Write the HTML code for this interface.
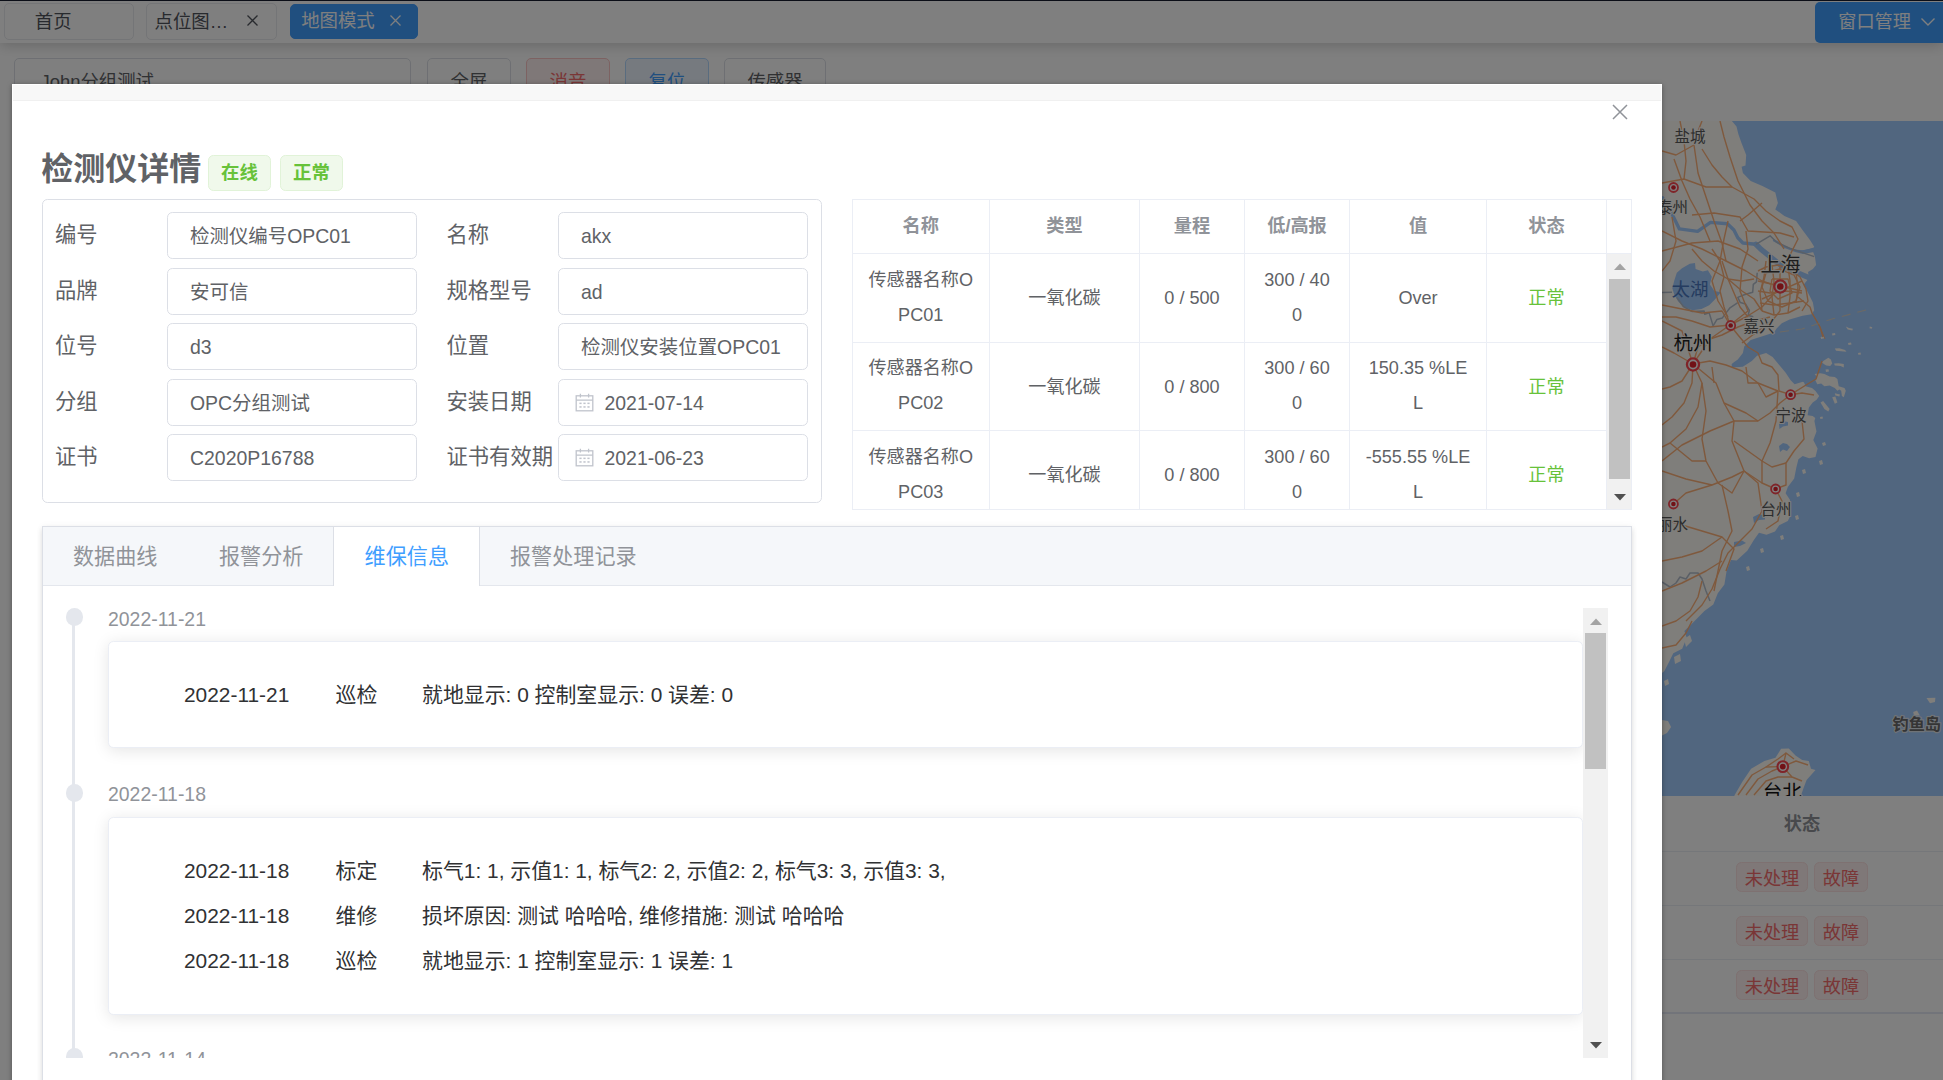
<!DOCTYPE html>
<html lang="zh-CN">
<head>
<meta charset="utf-8">
<title>检测仪详情</title>
<style>
*{box-sizing:border-box;margin:0;padding:0}
html,body{width:1943px;height:1080px;overflow:hidden}
body{position:relative;background:#fff;font-family:"Liberation Sans","Noto Sans CJK SC",sans-serif;color:#606266}
.abs{position:absolute}
.nowrap{white-space:nowrap}
/* ---------- underlying page ---------- */
#page{position:absolute;left:0;top:0;width:1943px;height:1080px;overflow:hidden}
#topline{position:absolute;left:0;top:0;width:1943px;height:1.4px;background:#161c2e}
#topbar{position:absolute;left:0;top:1px;width:1943px;height:42px;background:#fff;box-shadow:0 2px 14px rgba(0,0,0,.2)}
.ptab{position:absolute;top:3px;height:37px;border:1px solid #e8eaee;border-radius:5px;font-size:18.4px;line-height:35px;color:#50545c;white-space:nowrap}
.ptab.on{background:#409eff;border-color:#409eff;color:#fff}
.pbtn{position:absolute;top:58px;height:47px;border:1px solid #dcdfe6;border-radius:5px;background:#fff;font-size:18.4px;line-height:46px;text-align:center;color:#606266;white-space:nowrap}
#overlay{position:absolute;left:0;top:0;width:1943px;height:1080px;background:rgba(0,0,0,.5)}
/* ---------- dialog ---------- */
#dlg{position:absolute;left:12px;top:84px;width:1650px;height:1100px;background:#fff;box-shadow:0 1px 5px rgba(0,0,0,.35)}
#dlghead{position:absolute;left:1px;top:1px;width:1648px;height:16px;background:#f8f8f8;border-bottom:1px solid #f0f0f0}
.lab{position:absolute;font-size:21.3px;line-height:46.3px;height:47.3px;color:#606266;white-space:nowrap}
.inp{position:absolute;width:250px;height:47.3px;border:1px solid #dcdfe6;border-radius:5.4px;background:#fff;font-size:19.44px;line-height:46.2px;color:#606266;padding-left:22px;white-space:nowrap;overflow:hidden}
.inp.date{padding-left:45.5px}
.tag{position:absolute;top:155px;height:35.5px;width:63px;border:1px solid #e1f3d8;background:#f0f9eb;border-radius:5.4px;color:#67c23a;font-weight:bold;font-size:18.4px;line-height:34.5px;text-align:center}
.rtag{position:absolute;height:29.5px;border:1px solid #fde2e2;background:#fef0f0;border-radius:5.4px;color:#f56c6c;font-size:18.2px;line-height:32px;text-align:center;white-space:nowrap}
/* table */
.vl{position:absolute;top:199px;width:1px;height:311px;background:#ebeef5}
.hl{position:absolute;left:852px;height:1px;width:755px;background:#ebeef5}
.th{position:absolute;top:199px;height:54px;line-height:54px;text-align:center;font-weight:bold;font-size:18.2px;color:#909399;white-space:nowrap}
.td{position:absolute;text-align:center;font-size:18.1px;line-height:35px;color:#606266;white-space:nowrap}
.ok{color:#67c23a}
/* tabs */
.tb{position:absolute;top:527px;height:60px;line-height:60.6px;font-size:21.1px;color:#909399;white-space:nowrap}
.ts{position:absolute;left:108px;font-size:19.44px;line-height:26px;color:#909399;white-space:nowrap}
.dot{position:absolute;left:66.2px;width:17.3px;height:17.3px;border-radius:50%;background:#e4e7ed}
.card{position:absolute;left:108.5px;width:1475.2px;background:#fff;border:1px solid #ebeef5;border-radius:5.4px;box-shadow:0 2.7px 16px rgba(0,0,0,.1)}
.ct{position:absolute;font-size:20.9px;line-height:46.6px;height:45px;color:#303133;white-space:nowrap}
</style>
</head>
<body>
<div id="page">
  <div id="topbar"></div>
  <div id="topline"></div>
  <div class="ptab" style="left:4px;width:130px;padding-left:29.8px">首页</div>
  <div class="ptab" style="left:146px;width:131px;padding-left:7.5px">点位图…<svg class="abs" style="left:99px;top:9.7px" width="13" height="13" viewBox="0 0 13 13"><path d="M1.5 1.5L11.5 11.5M11.5 1.5L1.5 11.5" stroke="#50545c" stroke-width="1.3" fill="none"/></svg></div>
  <div class="ptab on" style="left:290px;top:4px;height:35px;width:128px;padding-left:10.2px;line-height:32px">地图模式<svg class="abs" style="left:98px;top:8.7px" width="13" height="13" viewBox="0 0 13 13"><path d="M1.5 1.5L11.5 11.5M11.5 1.5L1.5 11.5" stroke="#fff" stroke-width="1.3" fill="none"/></svg></div>
  <div class="abs" style="left:1815px;top:2px;width:140px;height:41px;background:#409eff;border-radius:5px 0 0 5px;color:#fff;font-size:18.2px;line-height:41.5px;padding-left:23.2px;white-space:nowrap">窗口管理<svg class="abs" style="left:104.6px;top:14.6px" width="16" height="10" viewBox="0 0 16 10"><path d="M1.5 1.5L8 8L14.5 1.5" stroke="#fff" stroke-width="1.4" fill="none"/></svg></div>

  <div class="pbtn" style="left:14px;width:397px;text-align:left;padding-left:25.5px">John分组测试</div>
  <div class="pbtn" style="left:427px;width:84px">全屏</div>
  <div class="pbtn" style="left:526px;width:84px;color:#f56c6c;background:#fef0f0;border-color:#fbc4c4">消音</div>
  <div class="pbtn" style="left:625px;width:84px;color:#409eff;background:#ecf5ff;border-color:#b3d8ff">复位</div>
  <div class="pbtn" style="left:724px;width:102px">传感器</div>

  <!-- MAP -->
  <div id="map" class="abs" style="left:1662px;top:121px;width:281px;height:675px;background:#a3ccff;overflow:hidden">
<svg class="abs" style="left:0;top:0" width="281" height="675" viewBox="0 0 281 675">
<rect width="281" height="675" fill="#a3ccff"/>
<polygon points="-5.0,-5.0 69.9,-5.0 69.9,0.0 74.5,5.5 76.4,13.3 79.6,22.3 84.2,34.0 83.5,44.4 79.6,45.7 80.9,52.1 88.7,59.9 100.4,65.1 113.3,71.6 115.9,81.9 113.3,88.4 122.4,94.9 134.1,100.1 140.5,109.0 148.3,119.4 152.2,125.8 150.5,129.5 152.9,135.6 154.1,144.0 150.9,147.9 146.0,151.0 147.0,157.0 141.8,163.4 147.0,173.8 150.9,181.6 152.2,189.3 149.6,193.2 140.5,194.8 127.6,198.4 119.8,202.3 114.6,207.5 112.0,211.4 96.5,216.6 88.7,219.1 82.2,225.6 80.9,232.1 75.8,238.6 71.9,241.2 69.7,243.0 69.7,246.4 80.8,245.7 89.8,239.9 95.0,234.7 104.1,232.1 110.6,236.0 117.0,243.8 123.5,251.6 128.7,259.3 132.6,263.2 141.7,260.5 143.5,265.2 150.0,267.0 153.5,270.0 157.2,274.9 154.6,278.8 150.7,281.4 146.9,286.6 145.6,294.3 150.7,295.0 153.3,296.9 152.4,299.9 154.5,310.6 151.3,319.1 155.6,327.6 153.5,336.1 147.1,337.2 140.7,335.1 136.4,338.3 134.3,346.8 132.2,357.4 125.8,365.9 123.6,372.3 127.9,378.7 129.0,393.6 125.8,400.0 117.2,404.3 113.0,410.6 104.5,413.8 97.0,411.7 91.7,419.2 85.3,429.8 74.7,439.4 69.0,439.0 64.6,450.1 62.4,463.4 55.8,472.3 51.3,483.4 42.4,490.1 35.8,496.8 29.1,503.4 22.4,510.1 24.7,516.7 20.2,527.8 11.3,532.3 6.9,541.2 2.4,550.1 -5.0,556.0" fill="#fffcf6"/>
<polygon points="72.4,680.0 72.4,674.5 80.2,661.1 89.1,647.8 102.4,640.0 113.5,636.7 119.1,627.8 126.8,627.4 133.5,634.5 140.2,638.9 146.8,640.0 149.0,647.8 153.5,648.9 144.6,658.9 141.3,667.8 139.0,674.5 139.0,680.0" fill="#fffcf6"/>
<polygon points="152.7,252.9 154.6,255.5 153.3,259.3 155.3,263.2 159.2,262.6 162.4,265.2 167.6,264.5 172.8,267.1 175.4,269.7 177.3,268.4 179.2,269.7 179.9,274.9 181.8,276.2 183.8,269.7 182.5,267.1 176.7,265.2 175.4,258.0 172.8,256.1 167.6,255.5 162.4,252.9 158.5,252.2" fill="#fffcf6"/>
<polygon points="159.8,241.2 162.4,239.3 166.3,236.7 168.9,238.6 170.2,242.5 168.2,245.1 164.3,244.4 161.8,243.1" fill="#fffcf6"/>
<polygon points="172.1,242.5 176.7,242.2 181.8,243.1 181.8,246.4 178.6,245.1 172.8,244.4" fill="#fffcf6"/>
<polygon points="172.8,227.6 177.3,227.2 183.1,228.9 184.4,230.8 179.2,230.2 174.1,229.8" fill="#fffcf6"/>
<polygon points="183.8,205.6 187.0,206.9 190.9,207.8 190.3,209.5 185.7,208.5" fill="#fffcf6"/>
<polygon points="207.8,205.6 210.3,206.2 209.7,207.8 207.5,207.2" fill="#fffcf6"/>
<polygon points="158.5,215.9 161.8,215.3 162.4,217.2 159.2,217.9" fill="#fffcf6"/>
<polygon points="158.5,281.4 161.1,280.1 167.6,287.9 166.3,290.4 162.4,287.9" fill="#fffcf6"/>
<polygon points="170.2,276.2 173.4,275.5 175.4,281.4 172.8,282.7" fill="#fffcf6"/>
<polygon points="172.8,272.3 178.0,273.6 177.3,275.5 173.4,274.6" fill="#fffcf6"/>
<polygon points="163.5,248.6 166.5,248.2 167.0,250.6 164.0,251.0" fill="#fffcf6"/>
<polygon points="186.0,222.0 189.0,221.5 189.5,223.5 186.5,224.0" fill="#fffcf6"/>
<polygon points="196.0,232.0 198.5,231.6 199.0,233.4 196.4,233.8" fill="#fffcf6"/>
<polygon points="170.0,212.5 173.0,212.0 173.4,214.0 170.4,214.4" fill="#fffcf6"/>
<polygon points="158.0,296.0 160.5,295.4 161.0,297.6 158.4,298.0" fill="#fffcf6"/>
<polygon points="160.0,322.0 163.0,321.0 164.0,324.0 161.0,325.0" fill="#fffcf6"/>
<polygon points="157.0,340.0 160.0,339.0 161.0,343.0 158.0,344.0" fill="#fffcf6"/>
<polygon points="140.0,349.0 143.0,348.0 144.0,352.0 141.0,353.0" fill="#fffcf6"/>
<polygon points="134.0,372.0 137.0,371.0 138.0,375.0 135.0,376.0" fill="#fffcf6"/>
<polygon points="133.0,395.0 136.0,394.0 137.0,398.0 134.0,399.0" fill="#fffcf6"/>
<polygon points="118.0,415.0 121.0,414.0 122.0,418.0 119.0,419.0" fill="#fffcf6"/>
<polygon points="98.0,428.0 101.0,427.0 102.0,431.0 99.0,432.0" fill="#fffcf6"/>
<polygon points="84.0,446.0 87.0,445.0 88.0,449.0 85.0,450.0" fill="#fffcf6"/>
<polygon points="0.0,599.0 6.0,600.0 9.1,606.0 5.0,612.0 0.0,614.5" fill="#fffcf6"/>
<polygon points="264.5,577.0 273.4,576.7 273.0,581.0 268.0,582.3" fill="#fffcf6"/>
<polygon points="251.2,591.0 255.0,589.5 257.9,594.5 252.0,594.5" fill="#fffcf6"/>
<polygon points="22.0,518.0 28.0,514.0 30.0,520.0 24.0,526.0" fill="#fffcf6"/>
<polygon points="12.0,536.0 18.0,533.0 19.0,540.0 13.0,543.0" fill="#fffcf6"/>
<polygon points="2.0,560.0 6.0,558.0 7.0,563.0 3.0,565.0" fill="#fffcf6"/>
<polygon points="117.0,303.0 121.0,300.0 126.0,301.0 126.0,304.5 121.0,305.5 117.5,308.0" fill="#a3ccff"/>
<polygon points="117.0,325.0 121.0,322.0 125.0,323.0 128.0,326.0 125.0,330.0 121.0,328.5 118.0,331.0" fill="#a3ccff"/>
<polygon points="91.0,396.0 97.0,393.0 103.0,394.5 103.0,398.5 97.0,399.0 92.0,402.0" fill="#a3ccff"/>
<polygon points="140.0,256.5 145.0,254.5 149.5,255.5 149.5,260.0 145.5,262.5 141.0,261.0" fill="#a3ccff"/>
<polygon points="72.0,421.0 80.0,419.5 84.0,422.0 78.0,425.0 72.0,426.0" fill="#a3ccff"/>
<polygon points="12.3,159.5 14.8,151.8 20.0,147.2 27.8,142.7 33.0,142.0 33.6,147.9 40.8,150.5 45.9,149.2 49.8,155.7 47.9,163.4 52.4,169.9 58.9,171.2 52.4,179.0 47.2,184.2 39.5,188.0 30.4,189.3 21.3,185.5 16.1,180.3 12.3,173.8 10.3,167.3" fill="#a3ccff"/>
<polyline points="0.6,76.8 11.0,94.9 17.4,107.9 35.6,110.4 48.5,101.4 65.4,102.7 71.9,109.0 75.8,116.8 80.9,122.0 93.9,123.3" fill="none" stroke="#a3ccff" stroke-width="3.4" stroke-linejoin="round" stroke-linecap="round"/>
<polyline points="93.9,123.3 99.1,128.4 105.6,133.6 112.0,138.8 118.5,144.0 127.6,147.9 135.4,151.8 141.8,154.4 149.0,157.5" fill="none" stroke="#a3ccff" stroke-width="5.4" stroke-linejoin="round" stroke-linecap="round"/>
<polyline points="112.0,119.5 114.6,120.7 122.4,125.8 132.8,129.7 140.5,130.4 151.0,128.6" fill="none" stroke="#a3ccff" stroke-width="2.2" stroke-linejoin="round" stroke-linecap="round"/>
<polygon points="133,129 141,129.5 152,126.5 152,131 141,133 133,131" fill="#a3ccff"/>
<g fill="none" stroke="#b4bfcc" stroke-width="1.5" stroke-linejoin="round">
<polyline points="93.9,123.3 108.1,114.8 114.6,121.3 127.6,127.1 152.2,135.6"/>
<polyline points="95.2,151.8 94.5,160.8 91.3,163.4 90.7,171.2 82.2,173.8 75.8,176.4 78.3,181.6 83.5,182.9 87.4,189.3 86.1,194.5 91.3,195.8"/>
<polyline points="75.8,181.6 68.0,186.8 64.1,191.9 60.2,197.1 55.0,198.4 51.1,204.9"/>
<polyline points="14.8,176.4 21.3,185.5 30.4,190.6 42.1,190.0 42.7,193.2 47.2,191.9 51.1,204.9"/>
<polyline points="0.0,171.5 10.0,171.2"/>
<polyline points="0.0,461.0 8.0,466.0 14.0,462.0 18.0,456.0 24.0,458.0 28.0,452.0 36.0,452.0 40.0,458.0 44.0,470.0 48.0,480.0"/>
</g>
<g fill="none" stroke="#ffb27a" stroke-width="1.4" stroke-linejoin="round">
<polyline points="40.0,0.0 36.0,10.0 32.0,24.0 36.0,52.0 44.0,76.0 52.0,100.0 60.0,122.0 64.0,140.0"/>
<polyline points="12.0,38.0 20.0,60.0 28.0,78.0 38.0,96.0 48.0,120.0"/>
<polyline points="58.0,0.0 62.0,16.0 68.0,36.0 76.0,60.0 88.0,84.0 100.0,100.0 112.0,112.0 122.0,128.0"/>
<polyline points="0.0,62.0 22.0,58.0 44.0,66.0 70.0,66.0 92.0,78.0 104.0,90.0 118.0,100.0 130.0,106.0 136.0,118.0 128.0,134.0"/>
<polyline points="30.0,94.0 52.0,92.0 78.0,96.0 86.0,110.0 118.0,112.0 132.0,116.0"/>
<polyline points="100.0,82.0 86.0,94.0 78.0,100.0"/>
<polyline points="0.0,110.0 20.0,120.0 40.0,128.0 64.0,140.0 84.0,150.0 100.0,160.0 118.0,166.0"/>
<polyline points="10.0,96.0 14.0,120.0 8.0,140.0 0.0,150.0"/>
<polyline points="0.0,130.0 30.0,122.0 56.0,120.0 78.0,128.0 96.0,140.0"/>
<polyline points="66.0,100.0 62.0,118.0 58.0,140.0 50.0,160.0 56.0,180.0 66.0,196.0"/>
<polyline points="84.0,110.0 86.0,128.0 80.0,146.0 78.0,170.0 86.0,190.0 68.0,204.0"/>
<polyline points="104.0,152.0 118.0,148.0 132.0,154.0 138.0,166.0 134.0,180.0 120.0,186.0 106.0,180.0 100.0,166.0 104.0,152.0"/>
<polyline points="110.0,158.0 126.0,158.0 130.0,172.0 116.0,178.0 108.0,170.0 110.0,158.0"/>
<polyline points="96.0,160.0 140.0,170.0"/>
<polyline points="118.0,146.0 118.0,190.0"/>
<polyline points="100.0,178.0 140.0,160.0"/>
<polyline points="118.0,166.0 100.0,186.0 84.0,196.0 68.0,204.0 48.0,218.0 31.0,243.0"/>
<polyline points="136.0,176.0 148.0,186.0 150.0,192.0"/>
<polyline points="150.0,192.0 158.0,206.0 161.0,216.0"/>
<polyline points="118.0,190.0 110.0,200.0 96.0,210.0 80.0,222.0"/>
<polyline points="96.0,150.0 104.0,146.0 116.0,144.0 128.0,148.0 138.0,156.0 144.0,168.0 146.0,180.0 140.0,190.0"/>
<polyline points="100.0,190.0 112.0,194.0 126.0,192.0 138.0,186.0"/>
<polyline points="104.0,140.0 102.0,156.0 98.0,172.0 100.0,190.0"/>
<polyline points="126.0,146.0 128.0,160.0 128.0,176.0 126.0,192.0"/>
<polyline points="110.0,144.0 112.0,160.0 110.0,176.0 112.0,194.0"/>
<polyline points="134.0,152.0 136.0,166.0 134.0,182.0"/>
<polyline points="96.0,170.0 108.0,172.0 124.0,170.0 140.0,172.0"/>
<polyline points="98.0,182.0 112.0,184.0 128.0,182.0 142.0,180.0"/>
<polyline points="92.0,158.0 80.0,160.0 66.0,158.0 52.0,150.0 40.0,140.0 30.0,128.0"/>
<polyline points="60.0,140.0 66.0,158.0 72.0,172.0 78.0,186.0 86.0,196.0"/>
<polyline points="50.0,128.0 58.0,140.0 62.0,156.0 58.0,170.0 62.0,186.0 68.0,204.0"/>
<polyline points="66.0,158.0 80.0,170.0 92.0,178.0 100.0,190.0"/>
<polyline points="0.0,196.0 14.0,196.0 30.0,200.0 48.0,206.0 68.0,204.0"/>
<polyline points="48.0,218.0 60.0,214.0 76.0,206.0 92.0,200.0 108.0,196.0"/>
<polyline points="31.0,243.0 36.0,226.0 48.0,218.0"/>
<polyline points="0.0,226.0 12.0,232.0 31.0,243.0"/>
<polyline points="31.0,243.0 30.0,262.0 22.0,282.0 10.0,296.0 0.0,304.0"/>
<polyline points="50.0,246.0 52.0,262.0"/>
<polyline points="84.0,246.0 86.0,262.0 96.0,262.0"/>
<polyline points="40.0,28.0 50.0,44.0 60.0,56.0 70.0,66.0"/>
<polyline points="0.0,30.0 14.0,34.0 32.0,24.0"/>
<polyline points="18.0,0.0 22.0,20.0 24.0,40.0 22.0,58.0"/>
<polyline points="96.0,262.0 104.0,276.0 116.0,270.0"/>
<polyline points="62.0,282.0 84.0,292.0 96.0,300.0"/>
<polyline points="8.0,322.0 30.0,340.0 44.0,340.0"/>
<polyline points="100.0,340.0 86.0,330.0 72.0,320.0"/>
<polyline points="124.0,342.0 110.0,346.0 100.0,340.0"/>
<polyline points="68.0,204.0 60.0,190.0 40.0,192.0 20.0,188.0 0.0,184.0"/>
<polyline points="0.0,200.0 20.0,210.0 31.0,243.0"/>
<polyline points="68.0,204.0 76.0,214.0 86.0,226.0 96.0,232.0 100.0,242.0 110.0,246.0 116.0,254.0 117.0,270.0 128.6,273.7"/>
<polyline points="31.0,243.0 48.0,240.0 64.0,244.0 80.0,250.0 96.0,262.0 116.0,270.0"/>
<polyline points="31.0,243.0 20.0,260.0 8.0,266.0 0.0,268.0"/>
<polyline points="31.0,243.0 40.0,262.0 36.0,286.0 24.0,308.0 8.0,322.0 0.0,326.0"/>
<polyline points="31.0,243.0 54.0,262.0 62.0,282.0 72.0,300.0 70.0,320.0 82.0,350.0 96.0,362.0 100.0,390.0"/>
<polyline points="128.6,273.7 118.0,282.0 108.0,292.0 96.0,300.0 72.0,300.0 48.0,310.0 20.0,324.0 0.0,340.0"/>
<polyline points="128.6,273.7 144.0,264.0 154.0,258.0 160.0,240.0"/>
<polyline points="128.6,273.7 140.0,272.0 152.0,274.0"/>
<polyline points="116.0,270.0 114.0,300.0 108.0,322.0 100.0,340.0 100.0,362.0 113.6,368.0"/>
<polyline points="140.0,300.0 142.0,318.0 132.0,330.0 124.0,342.0 124.0,364.0 113.6,368.0 120.0,380.0 116.0,400.0 104.0,408.0"/>
<polyline points="40.0,262.0 44.0,290.0 40.0,318.0 44.0,340.0 56.0,362.0 70.0,372.0 82.0,350.0"/>
<polyline points="0.0,350.0 24.0,358.0 50.0,364.0 70.0,356.0 82.0,350.0 100.0,362.0"/>
<polyline points="11.4,383.0 24.0,372.0 50.0,364.0"/>
<polyline points="0.0,398.0 20.0,404.0 40.0,410.0 60.0,416.0 72.0,428.0 64.0,450.0"/>
<polyline points="60.0,364.0 66.0,390.0 70.0,410.0 60.0,430.0 56.0,450.0 52.0,470.0"/>
<polyline points="100.0,390.0 90.0,408.0 78.0,420.0 66.0,432.0 58.0,448.0 50.0,468.0 40.0,484.0 24.0,500.0"/>
<polyline points="0.0,440.0 20.0,436.0 40.0,430.0 60.0,416.0"/>
<polyline points="0.0,470.0 20.0,462.0 44.0,450.0 60.0,440.0"/>
<polyline points="0.0,505.0 14.0,500.0 28.0,490.0 36.0,476.0 40.0,460.0"/>
<polyline points="0.0,527.0 14.0,524.0 24.0,512.0 30.0,500.0"/>
<polyline points="76.0,674.0 90.0,654.0 104.0,646.0 120.8,645.6 134.0,640.0 146.0,644.0"/>
<polyline points="84.0,674.0 96.0,658.0 110.0,650.0 120.8,645.6"/>
<polyline points="120.8,645.6 124.0,632.0 132.0,638.0"/>
<polyline points="120.8,645.6 130.0,656.0 140.0,660.0"/>
<polyline points="92.0,674.0 104.0,660.0 116.0,656.0 130.0,656.0"/>
<polyline points="104.0,646.0 116.0,638.0 124.0,632.0"/>
</g>
<path d="M118 211 L140 208 L170 198 L208 188" fill="none" stroke="#d9d3c8" stroke-width="1.1" stroke-dasharray="9 7"/>
<path d="M150 192 L158 206 L163 218" fill="none" stroke="#ffb27a" stroke-width="0.9"/>
<circle cx="11.5" cy="66.5" r="4.5" fill="#fff" stroke="#ff4952" stroke-width="1.8"/><circle cx="11.5" cy="66.5" r="2.3" fill="#e3232d"/>
<circle cx="118.3" cy="165.5" r="6.050000000000001" fill="#fff" stroke="#ff4952" stroke-width="2.3"/><circle cx="118.3" cy="165.5" r="3.3" fill="#e3232d"/>
<circle cx="68.7" cy="204.5" r="4.5" fill="#fff" stroke="#ff4952" stroke-width="1.8"/><circle cx="68.7" cy="204.5" r="2.3" fill="#e3232d"/>
<circle cx="31" cy="243.5" r="6.050000000000001" fill="#fff" stroke="#ff4952" stroke-width="2.3"/><circle cx="31" cy="243.5" r="3.3" fill="#e3232d"/>
<circle cx="128.6" cy="273.7" r="4.5" fill="#fff" stroke="#ff4952" stroke-width="1.8"/><circle cx="128.6" cy="273.7" r="2.3" fill="#e3232d"/>
<circle cx="113.6" cy="368" r="4.5" fill="#fff" stroke="#ff4952" stroke-width="1.8"/><circle cx="113.6" cy="368" r="2.3" fill="#e3232d"/>
<circle cx="11.4" cy="383" r="4.5" fill="#fff" stroke="#ff4952" stroke-width="1.8"/><circle cx="11.4" cy="383" r="2.3" fill="#e3232d"/>
<circle cx="120.8" cy="645.6" r="5.3500000000000005" fill="#fff" stroke="#ff4952" stroke-width="2.1"/><circle cx="120.8" cy="645.6" r="2.9" fill="#e3232d"/>
<text x="12.5" y="20.5" font-size="15.5" fill="#5a5a5a" font-weight="normal" stroke="#fffcf6" stroke-width="2.2" paint-order="stroke" stroke-linejoin="round">盐城</text>
<text x="-5" y="92" font-size="15.5" fill="#5a5a5a" font-weight="normal" stroke="#fffcf6" stroke-width="2.2" paint-order="stroke" stroke-linejoin="round">泰州</text>
<text x="98.5" y="150.5" font-size="20" fill="#3a3a3a" font-weight="normal" stroke="#fffcf6" stroke-width="2.2" paint-order="stroke" stroke-linejoin="round">上海</text>
<text x="9.5" y="174.5" font-size="18.5" fill="#4a78c0" font-weight="normal" stroke="none" stroke-width="0" paint-order="stroke" stroke-linejoin="round">太湖</text>
<text x="81.5" y="211" font-size="15.5" fill="#5a5a5a" font-weight="normal" stroke="#fffcf6" stroke-width="2.2" paint-order="stroke" stroke-linejoin="round">嘉兴</text>
<text x="11.5" y="229" font-size="19.5" fill="#222" font-weight="normal" stroke="#fffcf6" stroke-width="2.2" paint-order="stroke" stroke-linejoin="round">杭州</text>
<text x="113.5" y="300" font-size="15.5" fill="#5a5a5a" font-weight="normal" stroke="#fffcf6" stroke-width="2.2" paint-order="stroke" stroke-linejoin="round">宁波</text>
<text x="98.5" y="393.5" font-size="15.5" fill="#5a5a5a" font-weight="normal" stroke="#fffcf6" stroke-width="2.2" paint-order="stroke" stroke-linejoin="round">台州</text>
<text x="-5" y="408.5" font-size="15.5" fill="#5a5a5a" font-weight="normal" stroke="#fffcf6" stroke-width="2.2" paint-order="stroke" stroke-linejoin="round">丽水</text>
<text x="100.8" y="678" font-size="19.5" fill="#111" font-weight="normal" stroke="#fffcf6" stroke-width="2.2" paint-order="stroke" stroke-linejoin="round">台北</text>
<text x="230.5" y="608.5" font-size="16.2" fill="#6a6a6a" font-weight="bold" stroke="#dfe6ee" stroke-width="2.4" paint-order="stroke" stroke-linejoin="round">钓鱼岛</text>
</svg>
</div>

  <!-- right bottom table -->
  <div class="abs" style="left:1662px;top:796px;width:281px;height:284px;background:#fff"></div>
  <div class="abs nowrap" style="left:1742px;top:806px;width:120px;text-align:center;font-weight:bold;font-size:18.2px;line-height:36px;color:#909399">状态</div>
  <div class="abs" style="left:1662px;top:851px;width:281px;height:1px;background:#ebeef5"></div>
  <div class="abs" style="left:1662px;top:905px;width:281px;height:1px;background:#ebeef5"></div>
  <div class="abs" style="left:1662px;top:959px;width:281px;height:1px;background:#ebeef5"></div>
  <div class="abs" style="left:1662px;top:1012px;width:281px;height:1.5px;background:#e4e9f4"></div>
<div class="rtag" style="left:1736px;top:862.3px;width:72px">未处理</div><div class="rtag" style="left:1814px;top:862.3px;width:54px">故障</div>
<div class="rtag" style="left:1736px;top:916.3px;width:72px">未处理</div><div class="rtag" style="left:1814px;top:916.3px;width:54px">故障</div>
<div class="rtag" style="left:1736px;top:970.3px;width:72px">未处理</div><div class="rtag" style="left:1814px;top:970.3px;width:54px">故障</div>
</div>
<div id="overlay"></div>

<div id="dlg"><div id="dlghead"></div></div>
<svg class="abs" style="left:1612px;top:104px" width="16" height="16" viewBox="0 0 16 16"><path d="M1 1L15 15M15 1L1 15" stroke="#909399" stroke-width="1.5" fill="none"/></svg>

<div class="abs nowrap" style="left:41.3px;top:146.9px;font-size:32px;line-height:44px;font-weight:bold;color:#606266">检测仪详情</div>
<div class="tag" style="left:208px">在线</div>
<div class="tag" style="left:280px">正常</div>

<!-- form box -->
<div class="abs" style="left:42px;top:199px;width:780px;height:304px;border:1px solid #dcdfe6;border-radius:5.4px"></div>

<div class="lab" style="left:55px;top:212px">编号</div><div class="inp" style="left:167px;top:212px">检测仪编号OPC01</div>
<div class="lab" style="left:55px;top:268px">品牌</div><div class="inp" style="left:167px;top:268px">安可信</div>
<div class="lab" style="left:55px;top:323px">位号</div><div class="inp" style="left:167px;top:323px">d3</div>
<div class="lab" style="left:55px;top:379px">分组</div><div class="inp" style="left:167px;top:379px">OPC分组测试</div>
<div class="lab" style="left:55px;top:434px">证书</div><div class="inp" style="left:167px;top:434px">C2020P16788</div>
<div class="lab" style="left:446.5px;top:212px">名称</div><div class="inp" style="left:558px;top:212px">akx</div>
<div class="lab" style="left:446.5px;top:268px">规格型号</div><div class="inp" style="left:558px;top:268px">ad</div>
<div class="lab" style="left:446.5px;top:323px">位置</div><div class="inp" style="left:558px;top:323px">检测仪安装位置OPC01</div>
<div class="lab" style="left:446.5px;top:379px">安装日期</div><div class="inp date" style="left:558px;top:379px"><svg class="abs" style="left:16px;top:12.6px" width="19" height="19" viewBox="0 0 19 19"><g fill="none" stroke="#c0c4cc" stroke-width="1.3"><rect x="1.2" y="2.8" width="16.6" height="15"/><path d="M1.2 7.2H17.8M5.4 0.8V4.4M13.6 0.8V4.4"/></g><g fill="#c0c4cc"><rect x="4.4" y="9.6" width="2.2" height="1.5"/><rect x="8.4" y="9.6" width="2.2" height="1.5"/><rect x="12.4" y="9.6" width="2.2" height="1.5"/><rect x="4.4" y="13.2" width="2.2" height="1.5"/><rect x="8.4" y="13.2" width="2.2" height="1.5"/><rect x="12.4" y="13.2" width="2.2" height="1.5"/></g></svg>2021-07-14</div>
<div class="lab" style="left:446.5px;top:434px">证书有效期</div><div class="inp date" style="left:558px;top:434px"><svg class="abs" style="left:16px;top:12.6px" width="19" height="19" viewBox="0 0 19 19"><g fill="none" stroke="#c0c4cc" stroke-width="1.3"><rect x="1.2" y="2.8" width="16.6" height="15"/><path d="M1.2 7.2H17.8M5.4 0.8V4.4M13.6 0.8V4.4"/></g><g fill="#c0c4cc"><rect x="4.4" y="9.6" width="2.2" height="1.5"/><rect x="8.4" y="9.6" width="2.2" height="1.5"/><rect x="12.4" y="9.6" width="2.2" height="1.5"/><rect x="4.4" y="13.2" width="2.2" height="1.5"/><rect x="8.4" y="13.2" width="2.2" height="1.5"/><rect x="12.4" y="13.2" width="2.2" height="1.5"/></g></svg>2021-06-23</div>
<!-- sensor table -->
<div class="abs" style="left:852px;top:199px;width:780px;height:311px;border:1px solid #ebeef5;border-right:none;border-bottom:none"></div>
<div class="abs" style="left:852px;top:509px;width:780px;height:1.3px;background:#ebeef5"></div>
<div class="abs" style="left:1631px;top:199px;width:1px;height:311px;background:#ebeef5"></div>
<div class="vl" style="left:989.0px"></div>
<div class="vl" style="left:1139.0px"></div>
<div class="vl" style="left:1244.0px"></div>
<div class="vl" style="left:1349.0px"></div>
<div class="vl" style="left:1486.0px"></div>
<div class="vl" style="left:1605.9px"></div>
<div class="hl" style="top:253px;width:779px"></div>
<div class="hl" style="top:342px"></div>
<div class="hl" style="top:430.4px"></div>
<div class="th" style="left:852px;width:137.5px">名称</div>
<div class="th" style="left:989.5px;width:150.0px">类型</div>
<div class="th" style="left:1139.5px;width:105.0px">量程</div>
<div class="th" style="left:1244.5px;width:105.0px">低/高报</div>
<div class="th" style="left:1349.5px;width:137.0px">值</div>
<div class="th" style="left:1486.5px;width:119.90000000000009px">状态</div>
<div class="td" style="left:852px;width:137.5px;top:262.6px">传感器名称O<br>PC01</div>
<div class="td" style="left:989.5px;width:150.0px;top:281.2px">一氧化碳</div>
<div class="td" style="left:1139.5px;width:105.0px;top:281.2px">0 / 500</div>
<div class="td" style="left:1244.5px;width:105.0px;top:262.6px">300 / 40<br>0</div>
<div class="td" style="left:1349.5px;width:137.0px;top:281.2px">Over</div>
<div class="td ok" style="left:1486.5px;width:119.90000000000009px;top:281.2px">正常</div>
<div class="td" style="left:852px;width:137.5px;top:351.2px">传感器名称O<br>PC02</div>
<div class="td" style="left:989.5px;width:150.0px;top:369.8px">一氧化碳</div>
<div class="td" style="left:1139.5px;width:105.0px;top:369.8px">0 / 800</div>
<div class="td" style="left:1244.5px;width:105.0px;top:351.2px">300 / 60<br>0</div>
<div class="td" style="left:1349.5px;width:137.0px;top:351.2px">150.35 %LE<br>L</div>
<div class="td ok" style="left:1486.5px;width:119.90000000000009px;top:369.8px">正常</div>
<div class="td" style="left:852px;width:137.5px;top:439.6px;height:69.4px;overflow:hidden">传感器名称O<br>PC03</div>
<div class="td" style="left:989.5px;width:150.0px;top:458.2px;height:51.9px;overflow:hidden">一氧化碳</div>
<div class="td" style="left:1139.5px;width:105.0px;top:458.2px;height:51.9px;overflow:hidden">0 / 800</div>
<div class="td" style="left:1244.5px;width:105.0px;top:439.6px;height:69.4px;overflow:hidden">300 / 60<br>0</div>
<div class="td" style="left:1349.5px;width:137.0px;top:439.6px;height:69.4px;overflow:hidden">-555.55 %LE<br>L</div>
<div class="td ok" style="left:1486.5px;width:119.90000000000009px;top:458.2px;height:51.9px;overflow:hidden">正常</div>
<div class="abs" style="left:1606.9px;top:254px;width:24.1px;height:255.2px;background:#f1f1f1"></div>
<div class="abs" style="left:1609px;top:278.8px;width:21px;height:200px;background:#c1c1c1"></div>
<svg class="abs" style="left:1613.5px;top:263px" width="12" height="7" viewBox="0 0 12 7"><path d="M0 7L6 0.6L12 7Z" fill="#a3a3a3"/></svg>
<svg class="abs" style="left:1613.5px;top:493.5px" width="12" height="7" viewBox="0 0 12 7"><path d="M0 0L6 6.4L12 0Z" fill="#505050"/></svg>
<!-- tabs card -->
<div class="abs" style="left:42px;top:526px;width:1590px;height:600px;border:1px solid #dcdfe6;background:#fff;box-shadow:0 2.7px 5.4px rgba(0,0,0,.12),0 0 8px rgba(0,0,0,.04)"></div>
<div class="abs" style="left:43px;top:527px;width:1588px;height:58.5px;background:#f5f7fa;border-bottom:1px solid #e4e7ed"></div>
<div class="abs" style="left:333.4px;top:526.5px;width:146.6px;height:59.5px;background:#fff;border-left:1px solid #dcdfe6;border-right:1px solid #dcdfe6"></div>
<div class="tb" style="left:73px">数据曲线</div>
<div class="tb" style="left:219px">报警分析</div>
<div class="tb" style="left:364.6px;color:#409eff">维保信息</div>
<div class="tb" style="left:510px">报警处理记录</div>
<div id="tl" class="abs" style="left:43px;top:600px;width:1566px;height:458px;overflow:hidden">
<div class="abs" style="left:29.299999999999997px;top:17px;width:3.2px;height:500px;background:#e4e7ed"></div>
<div class="dot" style="left:22.6px;top:8.3px"></div>
<div class="dot" style="left:22.6px;top:184.4px"></div>
<div class="dot" style="left:22.6px;top:447.9px"></div>
<div class="ts" style="left:65px;top:6.3px">2022-11-21</div>
<div class="ts" style="left:65px;top:181.3px">2022-11-18</div>
<div class="ts" style="left:65px;top:446.2px">2022-11-14</div>
<div class="card" style="left:64.8px;top:41.4px;height:106.4px"></div>
<div class="card" style="left:64.8px;top:217.4px;height:197.3px"></div>
<div class="ct" style="left:141px;top:72.4px">2022-11-21</div><div class="ct" style="left:292.5px;top:72.4px">巡检</div><div class="ct" style="left:379px;top:72.4px">就地显示: 0 控制室显示: 0 误差: 0</div>
<div class="ct" style="left:141px;top:248.4px">2022-11-18</div><div class="ct" style="left:292.5px;top:248.4px">标定</div><div class="ct" style="left:379px;top:248.4px">标气1: 1, 示值1: 1, 标气2: 2, 示值2: 2, 标气3: 3, 示值3: 3,</div>
<div class="ct" style="left:141px;top:293.2px">2022-11-18</div><div class="ct" style="left:292.5px;top:293.2px">维修</div><div class="ct" style="left:379px;top:293.2px">损坏原因: 测试 哈哈哈, 维修措施: 测试 哈哈哈</div>
<div class="ct" style="left:141px;top:338.0px">2022-11-18</div><div class="ct" style="left:292.5px;top:338.0px">巡检</div><div class="ct" style="left:379px;top:338.0px">就地显示: 1 控制室显示: 1 误差: 1</div>
<div class="abs" style="left:1540.3px;top:7.8px;width:24.7px;height:450.2px;background:#f1f1f1"></div>
<div class="abs" style="left:1542.2px;top:33.0px;width:20.7px;height:136px;background:#c1c1c1"></div>
<svg class="abs" style="left:1546.6px;top:17.5px" width="12" height="7" viewBox="0 0 12 7"><path d="M0 7L6 0.6L12 7Z" fill="#a3a3a3"/></svg>
<svg class="abs" style="left:1546.6px;top:441.5px" width="12" height="7" viewBox="0 0 12 7"><path d="M0 0L6 6.4L12 0Z" fill="#505050"/></svg>
</div>
</body>
</html>
